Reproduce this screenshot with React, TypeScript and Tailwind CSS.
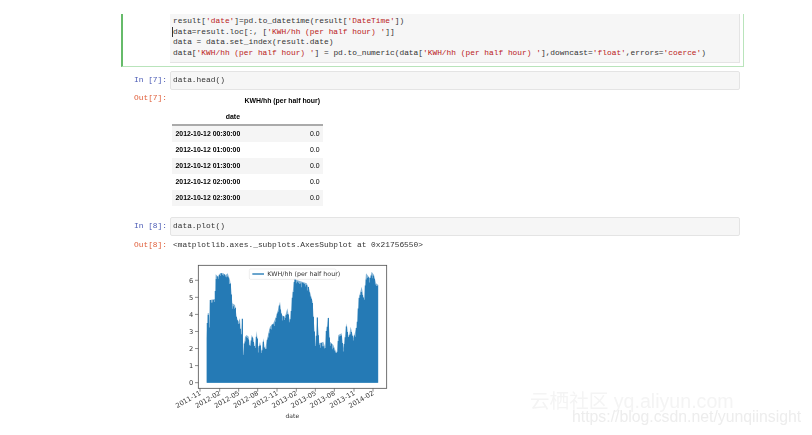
import React from 'react';

const mono = "font-['Liberation_Mono',monospace] text-[7.87px] leading-[10.6px] whitespace-pre";

const S = ({ children }: { children: React.ReactNode }) => <span className="text-[#ba2121]">{children}</span>;

const rows = ['2012-10-12 00:30:00', '2012-10-12 01:00:00', '2012-10-12 01:30:00', '2012-10-12 02:00:00', '2012-10-12 02:30:00'];

const envelope = [
  [140, 383], [140, 250], [143, 175], [147, 175], [148, 210], [150, 135], [165, 132], [167, 58], [175, 65], [180, 55],
  [190, 55], [197, 60], [203, 55], [210, 75], [213, 95], [217, 145], [225, 150], [230, 185], [235, 200], [240, 190],
  [243, 245], [247, 190], [250, 295], [255, 245], [260, 240], [266, 245], [270, 275], [275, 240], [280, 250], [285, 280],
  [290, 228], [295, 280], [300, 260], [305, 290], [310, 250], [315, 285], [325, 235], [330, 215], [340, 205], [350, 180],
  [360, 140], [365, 180], [375, 185], [382, 160], [390, 200], [397, 120], [403, 70], [410, 75], [440, 85], [447, 100],
  [458, 140], [462, 205], [467, 270], [472, 185], [478, 265], [490, 260], [495, 275], [498, 235], [505, 185], [510, 260],
  [520, 270], [530, 295], [535, 240], [545, 235], [550, 280], [560, 205], [566, 250], [572, 215], [580, 250], [590, 215],
  [596, 130], [605, 95], [612, 135], [618, 55], [630, 70], [635, 50], [642, 60], [648, 85], [655, 90], [655, 383],
];

const xTicks = [
  [120, '2011-11'], [179, '2012-02'], [236, '2012-05'], [293, '2012-08'], [351, '2012-11'],
  [409, '2013-02'], [466, '2013-05'], [523, '2013-08'], [582, '2013-11'], [639, '2014-02'],
] as const;

// top of the filled area at x, with a repeatable jitter so the edge looks like half-hourly spikes
const topAt = (x: number) => {
  for (let i = 1; i < envelope.length - 1; i++) {
    const [x0, y0] = envelope[i];
    const [x1, y1] = envelope[i + 1];
    if (x >= x0 && x <= x1 && x1 > x0) return y0 + ((y1 - y0) * (x - x0)) / (x1 - x0);
  }
  return 383;
};

const spikes: { x: number; y: number }[] = [];
for (let x = 142; x < 655; x += 3) {
  const jitter = Math.abs(Math.sin(x * 12.9898) * 43758.5453) % 1;
  spikes.push({ x, y: topAt(x) + jitter * 18 });
}

function Plot() {
  return (
    <svg width="240" height="180" viewBox="0 0 720 540" fontFamily="'DejaVu Sans', sans-serif" fill="#333" className="blur-[0.3px]">
      <polygon points={envelope.map(p => p.join(',')).join(' ')} fill="#1f77b4" fillOpacity="0.55" />
      {spikes.map(s => (
        <line key={s.x} x1={s.x} x2={s.x} y1={s.y} y2="383" stroke="#1f77b4" strokeWidth="3.4" />
      ))}
      <rect x="115" y="31" width="565" height="369" fill="none" stroke="#555" strokeWidth="2.5" />
      {[0, 1, 2, 3, 4, 5, 6].map(v => {
        const y = 383 - v * 51.2;
        return (
          <g key={v}>
            <line x1="105" x2="115" y1={y} y2={y} stroke="#555" strokeWidth="2" />
            <text x="100" y={y + 7} fontSize="20" textAnchor="end">{v}</text>
          </g>
        );
      })}
      {xTicks.map(([x, label]) => (
        <g key={label}>
          <line x1={x} x2={x} y1="400" y2="410" stroke="#555" strokeWidth="2" />
          <text transform={`translate(${x + 4} 418) rotate(-30)`} fontSize="20" textAnchor="end">{label}</text>
        </g>
      ))}
      <text x="397" y="490" fontSize="18" textAnchor="middle">date</text>
      <rect x="268" y="42" width="260" height="31" rx="4" fill="#fff" fillOpacity="0.85" stroke="#ddd" strokeWidth="1.5" />
      <line x1="277" x2="312" y1="57" y2="57" stroke="#1f77b4" strokeWidth="4" />
      <text x="322" y="64" fontSize="19">KWH/hh (per half hour)</text>
    </svg>
  );
}

function Prompt({ kind, n }: { kind: 'In' | 'Out'; n: number }) {
  return (
    <div className={`${mono} w-[44px] shrink-0 text-right ${kind === 'In' ? 'text-[#4a5ab5]' : 'text-[#e0603c]'}`}>
      {kind === 'In' ? 'In ' : 'Out'}[{n}]:
    </div>
  );
}

function InputBox({ text }: { text: string }) {
  return (
    <div className={`${mono} flex-1 h-[19px] mr-[4px] ml-[3px] px-[2px] flex items-center bg-[#f6f6f6] border border-[#e4e4e4] rounded-[2px] text-[#333]`}>
      {text}
    </div>
  );
}

export default function App() {
  return (
    <div className="relative w-[812px] h-[435px] overflow-hidden bg-white">
      <div className="blur-[0.55px] pt-[14px] pl-[121px] w-[744px]">
        {/* selected cell */}
        <div className="flex h-[53px] border-l-[2px] border-l-[#66bb6a] border-r border-b border-[#b9e4bb] overflow-hidden">
          <div className="w-[47px] shrink-0" />
          <div className={`${mono} flex-1 h-[49px] overflow-hidden mr-[3px] bg-[#f6f6f6] border-r border-b border-[#e4e4e4] text-[#333] pl-[3px] pt-[2px]`}>
            <div>result[<S>'date'</S>]=pd.to_datetime(result[<S>'DateTime'</S>])</div>
            <div className="relative">
              <span className="absolute -left-[1px] top-[0px] w-px h-[10px] bg-[#333]" />
              data=result.loc[:, [<S>'KWH/hh (per half hour) '</S>]]
            </div>
            <div>data = data.set_index(result.date)</div>
            <div>data[<S>'KWH/hh (per half hour) '</S>] = pd.to_numeric(data[<S>'KWH/hh (per half hour) '</S>],downcast=<S>'float'</S>,errors=<S>'coerce'</S>)</div>
          </div>
        </div>

        <div className="flex items-center h-[19px] mt-[4px] pl-[2px]">
          <Prompt kind="In" n={7} />
          <InputBox text="data.head()" />
        </div>

        <div className="flex pl-[2px] mt-[3px]">
          <Prompt kind="Out" n={7} />
          <div className="ml-[5px] w-[151px] font-['Liberation_Sans',sans-serif] text-[6.9px] font-bold text-black">
            <div className="h-[16px] pt-[1px] pr-[3px] text-right leading-[14px]">KWH/hh (per half hour)</div>
            <div className="h-[15px] w-[68px] text-right leading-[15px]">date</div>
            <div className="h-[2px] bg-[#aaa]" />
            {rows.map((r, i) => (
              <div key={r} className={`flex justify-between items-center h-[16px] px-[3.5px] ${i % 2 === 0 ? 'bg-[#f5f5f5]' : 'bg-white'}`}>
                <span>{r}</span>
                <span className="font-normal">0.0</span>
              </div>
            ))}
          </div>
        </div>

        <div className="flex items-center h-[19px] mt-[11px] pl-[2px]">
          <Prompt kind="In" n={8} />
          <InputBox text="data.plot()" />
        </div>

        <div className="flex items-center h-[12px] mt-[3px] pl-[2px]">
          <Prompt kind="Out" n={8} />
          <div className={`${mono} ml-[6px] text-[#333]`}>{'<matplotlib.axes._subplots.AxesSubplot at 0x21756550>'}</div>
        </div>

        <div className="ml-[39px] mt-[4px]">
          <Plot />
        </div>
      </div>

      {/* watermark */}
      <div className="absolute left-[530px] top-[389px] font-['Liberation_Sans','Noto_Sans_CJK_SC',sans-serif] text-[19.6px] leading-[24px] text-[#f4f4f4] whitespace-pre blur-[0.4px]">
        云栖社区 yq.aliyun.com
      </div>
      <div className="absolute left-[572px] top-[407px] font-['Liberation_Sans',sans-serif] text-[15.8px] leading-[20px] text-[#ededed] whitespace-pre blur-[0.4px]">
        https://blog.csdn.net/yunqiinsight
      </div>
    </div>
  );
}
